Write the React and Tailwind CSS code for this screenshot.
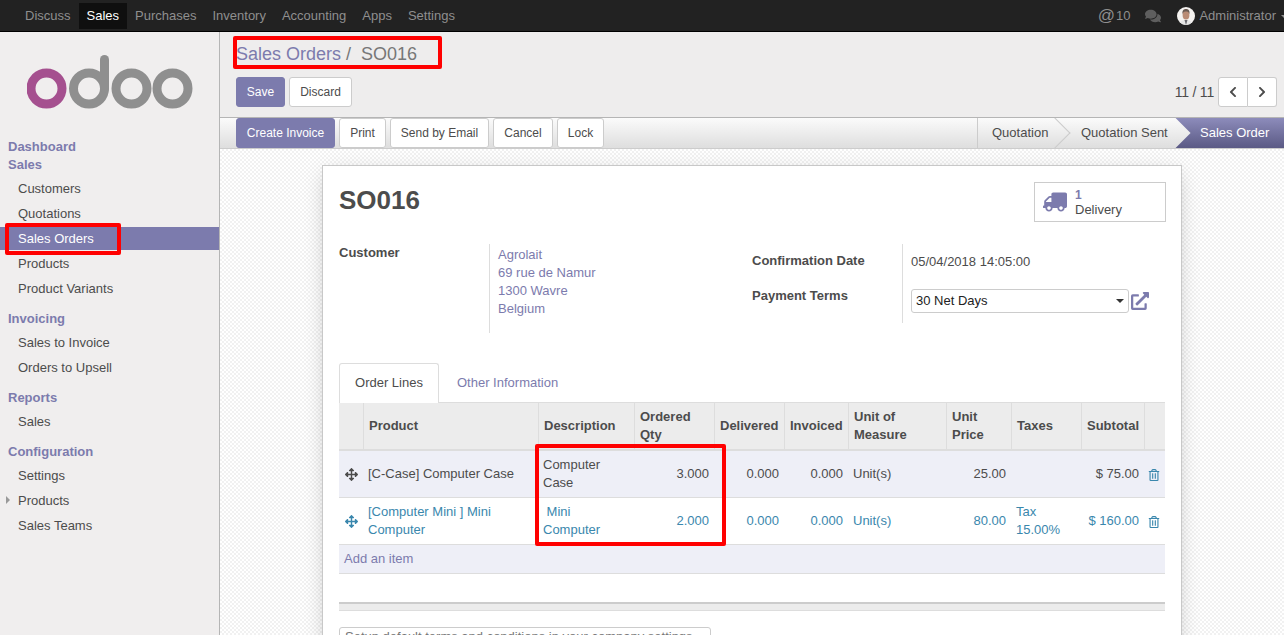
import React from "react";
import {
  FaArrowsAlt,
  FaChevronLeft,
  FaChevronRight,
  FaComments,
  FaExternalLinkAlt,
  FaRegTrashAlt,
  FaTruck,
} from "react-icons/fa";

const topMenu = ["Discuss", "Sales", "Purchases", "Inventory", "Accounting", "Apps", "Settings"];

const sideMenu = [
  { head: ["Dashboard", "Sales"], items: ["Customers", "Quotations", "Sales Orders", "Products", "Product Variants"] },
  { head: ["Invoicing"], items: ["Sales to Invoice", "Orders to Upsell"] },
  { head: ["Reports"], items: ["Sales"] },
  { head: ["Configuration"], items: ["Settings", "Products", "Sales Teams"] },
];

const Logo = () => (
  <svg width="166" height="55" viewBox="0 0 166 55" fill="none">
    <circle cx="19.5" cy="33.5" r="15.5" stroke="#a5508f" strokeWidth="9" />
    <circle cx="62" cy="33.5" r="15.5" stroke="#8f8f8f" strokeWidth="9" />
    <path d="M77.5 33.5V4.5" stroke="#8f8f8f" strokeWidth="9" strokeLinecap="round" />
    <circle cx="104.5" cy="33.5" r="15.5" stroke="#8f8f8f" strokeWidth="9" />
    <circle cx="145.5" cy="33.5" r="15.5" stroke="#8f8f8f" strokeWidth="9" />
  </svg>
);

const Avatar = () => (
  <svg width="18" height="18" viewBox="0 0 18 18" className="rounded-full">
    <rect width="18" height="18" fill="#f4f2f0" />
    <path d="M2 18c1-4 4-5 7-5s6 1 7 5z" fill="#e6e6e6" />
    <path d="M7.5 13l1.500 5 1.500-5z" fill="#6b6b70" />
    <ellipse cx="9" cy="8" rx="3.400" ry="4.600" fill="#b98b74" />
    <path d="M5.500 7c-.5-4 1.500-5 3.500-5s4 1 3.500 5c-.8-2-1.800-2.500-3.500-2.500S6.300 5 5.500 7z" fill="#6a5a52" />
  </svg>
);

const Btn = ({ primary, children, className = "" }) => (
  <button
    className={
      (primary ? "bg-[#7c7bad] border-[#7c7bad] text-white " : "bg-white border-[#ccc] text-[#4c4c4c] ") +
      "border rounded-[3px] text-[12px] h-[30px] flex items-center justify-center " +
      className
    }
  >
    {children}
  </button>
);

const Th = ({ children }) => (
  <th className="border-r border-b-2 border-[#ddd] px-[5px] pb-[1px] font-bold text-left text-[13px] leading-[18px]">
    {children}
  </th>
);

const Row = ({ bg, color, product, desc, qty, price, taxes, subtotal }) => {
  const text = "pl-[4px] pr-[6px]";
  const num = "pl-[4px] pr-[6px] text-right";
  return (
    <tr className={bg + " " + color + " h-[47px] [&>td]:border-b [&>td]:border-[#ddd]"}>
      <td className="text-center">
        <FaArrowsAlt className="inline-block text-[13px]" />
      </td>
      <td className={text}>{product}</td>
      <td className={text}>{desc}</td>
      <td className={num}>{qty}</td>
      <td className={num}>0.000</td>
      <td className={num}>0.000</td>
      <td className={text}>Unit(s)</td>
      <td className={num}>{price}</td>
      <td className={text}>{taxes}</td>
      <td className={num}>{subtotal}</td>
      <td className="text-center">
        <FaRegTrashAlt className="inline-block text-[12px] text-[#3a87ad] mr-[3px]" />
      </td>
    </tr>
  );
};

const App = () => {
  return (
    <div className="relative h-[635px] w-[1284px] overflow-hidden flex flex-col bg-white text-[13px] text-[#4c4c4c] [font-family:'Liberation_Sans',Arial,sans-serif]">
      {/* top bar */}
      <nav className="h-[32px] shrink-0 bg-[#222] border-b border-black flex items-center pl-[17px] pr-[1px] text-[#8f8f8f]">
        {topMenu.map((m) => (
          <span
            key={m}
            className={"px-[8px] h-[26px] leading-[26px] " + (m === "Sales" ? "bg-[#0f0f0f] text-white" : "")}
          >
            {m}
          </span>
        ))}
        <div className="ml-auto flex items-center">
          <span className="text-[17px] leading-none mr-[1px]">@</span>
          <span>10</span>
          <FaComments className="text-[16px] ml-[15px] text-[#5e5e5e]" />
          <span className="ml-[16px] mr-[4px]">
            <Avatar />
          </span>
          <span>Administrator</span>
          <span className="ml-[5px] mr-[-4px] mb-[-1px] border-x-[3px] border-t-[3px] border-x-transparent border-t-[#8f8f8f]" />
        </div>
      </nav>

      <div className="flex flex-1 min-h-0">
        {/* sidebar */}
        <aside className="w-[220px] shrink-0 bg-[#f0eeee] border-r border-[#b5b5b5]">
          <div className="h-[106px] pl-[27px] pt-[23px]">
            <Logo />
          </div>
          {sideMenu.map((g, i) => (
            <div key={i} className="mb-[9px]">
              <div className="mb-[2px]">
                {g.head.map((h) => (
                  <div key={h} className="pl-[8px] h-[18px] leading-[18px] font-bold text-[#7c7bad]">
                    {h}
                  </div>
                ))}
              </div>
              {g.items.map((it) => (
                <div key={it} className="h-[25px] flex items-center pl-[18px] relative">
                  {it === "Sales Orders" ? (
                    <div className="bg-[#7c7bad] text-white h-[23px] leading-[23px] -ml-[18px] pl-[18px] w-[219px]">{it}</div>
                  ) : (
                    it
                  )}
                  {g.head[0] === "Configuration" && it === "Products" ? (
                    <span className="absolute left-[6px] top-[8px] border-y-[4px] border-l-[4px] border-y-transparent border-l-[#999]" />
                  ) : null}
                </div>
              ))}
            </div>
          ))}
        </aside>

        <main className="flex-1 min-w-0 flex flex-col">
          {/* breadcrumb + buttons */}
          <div className="h-[86px] shrink-0 bg-[#eeeded] border-b border-[#b5b5b5] pl-[16px] pr-[6px] pt-[11px]">
            <div className="text-[18px] leading-[22px] h-[34px] text-[#777]">
              <span className="text-[#7c7bad]">Sales Orders</span> /&nbsp; SO016
            </div>
            <div className="flex items-center gap-[4px]">
              <Btn primary className="w-[49px]">Save</Btn>
              <Btn className="w-[63px]">Discard</Btn>
              <span className="ml-auto text-[14px] tracking-[-0.2px]">11 / 11</span>
              <div className="flex mr-[1px]">
                <Btn className="w-[30px] rounded-r-none"><FaChevronLeft className="text-[12px]" /></Btn>
                <Btn className="w-[29px] rounded-l-none border-l-0"><FaChevronRight className="text-[12px]" /></Btn>
              </div>
            </div>
          </div>

          {/* action + status bar */}
          <div className="h-[31px] shrink-0 flex items-stretch pl-[16px] overflow-hidden border-b border-[#ccc] bg-gradient-to-b from-[#fbfbfb] to-[#dedede]">
            <div className="flex gap-[4px] h-[30px]">
              <Btn primary className="w-[99px]">Create Invoice</Btn>
              <Btn className="w-[47px]">Print</Btn>
              <Btn className="w-[99px]">Send by Email</Btn>
              <Btn className="w-[60px]">Cancel</Btn>
              <Btn className="w-[47px]">Lock</Btn>
            </div>
            <div className="ml-auto flex h-[30px]">
              <div className="relative z-20 flex items-center w-[78px] pl-[14px] border-l border-[#ccc] bg-gradient-to-b from-[#fbfbfb] to-[#dedede]">
                <span className="relative z-10">Quotation</span>
                <span className="absolute right-[-11px] top-[4px] w-[22px] h-[22px] rotate-45 border-t border-r border-[#ccc] bg-gradient-to-br from-[#fbfbfb] to-[#dedede]" />
              </div>
              <div className="relative z-10 flex items-center w-[120px] pl-[26px] bg-gradient-to-b from-[#fbfbfb] to-[#dedede]">
                <span className="relative z-10">Quotation Sent</span>
                <span className="absolute right-[-11px] top-[4px] w-[22px] h-[22px] rotate-45 bg-gradient-to-br from-[#fbfbfb] to-[#dedede]" />
              </div>
              <div className="flex items-center w-[109px] pl-[25px] text-white bg-gradient-to-b from-[#8d8cbb] to-[#5b5a85]">
                Sales Order
              </div>
            </div>
          </div>

          {/* sheet */}
          <div className="flex-1 min-h-0 overflow-hidden pt-[16px] bg-[repeating-conic-gradient(#f1f1f1_0_25%,#ffffff_0_50%)] bg-[length:4px_4px]">
            <div className="w-[860px] mx-auto bg-white border border-[#c8c8c8] shadow-[0_5px_20px_-5px_rgba(0,0,0,0.25)] px-[16px] pt-[16px] h-[600px]">
              <div className="flex justify-between items-start">
                <h1 className="text-[26px] leading-[36px] font-bold">SO016</h1>
                <div className="w-[132px] h-[40px] border border-[#ccc] flex items-center pl-[8px] -mr-[1px]">
                  <FaTruck className="text-[24px] text-[#7c7bad] -scale-x-100" />
                  <div className="ml-[8px]">
                    <div className="font-bold text-[#7c7bad] text-[12px] leading-[14px] pt-[1px]">1</div>
                    <div className="leading-[15px]">Delivery</div>
                  </div>
                </div>
              </div>

              <div className="flex mt-[22px] h-[119px]">
                <div className="w-[413px] flex items-start">
                  <div className="w-[150px] font-bold -mt-[1px]">Customer</div>
                  <div className="border-l border-[#ddd] h-[89px] pl-[8px] leading-[18px] pt-[2px] text-[#7c7bad]">
                    Agrolait<br />69 rue de Namur<br />1300 Wavre<br />Belgium
                  </div>
                </div>
                <div className="flex items-start">
                  <div className="w-[150px] font-bold pt-[8px] leading-[18px]">
                    <div className="mb-[17px]">Confirmation Date</div>
                    <div>Payment Terms</div>
                  </div>
                  <div className="border-l border-[#ddd] h-[79px] pl-[8px] pt-[9px]">
                    <div className="leading-[18px]">05/04/2018 14:05:00</div>
                    <div className="flex items-center mt-[18px] gap-[2px]">
                      <div className="w-[218px] h-[24px] border border-[#ccc] rounded-[3px] flex items-center justify-between pl-[4px] pr-[4px] text-[#222]">
                        30 Net Days
                        <span className="border-x-[4px] border-t-[4px] border-x-transparent border-t-[#333]" />
                      </div>
                      <FaExternalLinkAlt className="text-[18px] text-[#7c7bad]" />
                    </div>
                  </div>
                </div>
              </div>

              {/* tabs */}
              <div className="flex h-[40px] border-b border-[#ddd]">
                <div className="w-[100px] h-[40px] pb-[2px] bg-white border border-b-0 border-[#ddd] rounded-t-[3px] flex items-center justify-center">
                  Order Lines
                </div>
                <div className="ml-[18px] flex items-center text-[#7c7bad]">Other Information</div>
              </div>

              <table className="w-[826px] table-fixed border-separate border-spacing-0 leading-[18px]">
                <colgroup>
                  <col className="w-[25px]" />
                  <col className="w-[175px]" />
                  <col className="w-[96px]" />
                  <col className="w-[80px]" />
                  <col className="w-[70px]" />
                  <col className="w-[64px]" />
                  <col className="w-[98px]" />
                  <col className="w-[65px]" />
                  <col className="w-[70px]" />
                  <col className="w-[63px]" />
                  <col className="w-[20px]" />
                </colgroup>
                <thead>
                  <tr className="h-[48px] bg-[#ececec]">
                    <Th />
                    <Th>Product</Th>
                    <Th>Description</Th>
                    <Th>Ordered Qty</Th>
                    <Th>Delivered</Th>
                    <Th>Invoiced</Th>
                    <Th>Unit of Measure</Th>
                    <Th>Unit Price</Th>
                    <Th>Taxes</Th>
                    <Th>Subtotal</Th>
                    <th className="border-b-2 border-[#ddd]" />
                  </tr>
                </thead>
                <tbody>
                  <Row
                    bg="bg-[#eeeff7]"
                    color="text-[#4c4c4c]"
                    product="[C-Case] Computer Case"
                    desc={<>Computer<br />Case</>}
                    qty="3.000"
                    price="25.00"
                    subtotal="$ 75.00"
                  />
                  <Row
                    bg="bg-white"
                    color="text-[#3a87ad]"
                    product="[Computer Mini ] Mini Computer"
                    desc={<>&nbsp;Mini<br />Computer</>}
                    qty="2.000"
                    price="80.00"
                    taxes={<>Tax<br />15.00%</>}
                    subtotal="$ 160.00"
                  />
                  <tr className="h-[29px] bg-[#eeeff7]">
                    <td colSpan={11} className="px-[5px] text-[#7c7bad] border-b border-[#ddd]">Add an item</td>
                  </tr>
                </tbody>
              </table>

              <div className="mt-[28px] h-[9px] bg-[#ececec] border-t-2 border-b border-t-[#ccc] border-b-[#ddd]" />
              <div className="mt-[16px] w-[372px] h-[40px] border border-[#ccc] rounded-[3px] px-[5px] leading-[16px] pt-[1px] text-[#777] whitespace-nowrap overflow-hidden">
                Setup default terms and conditions in your company settings.
              </div>
            </div>
          </div>
        </main>
      </div>

      {/* red annotations */}
      <div className="absolute left-[233px] top-[36px] w-[209px] h-[33px] border-4 border-[#f00] rounded-[2px]" />
      <div className="absolute left-[5px] top-[223px] w-[116px] h-[32px] border-4 border-[#f00] rounded-[2px]" />
      <div className="absolute left-[535px] top-[444px] w-[191px] h-[102px] border-4 border-[#f00] rounded-[2px]" />
    </div>
  );
};

export default App;
